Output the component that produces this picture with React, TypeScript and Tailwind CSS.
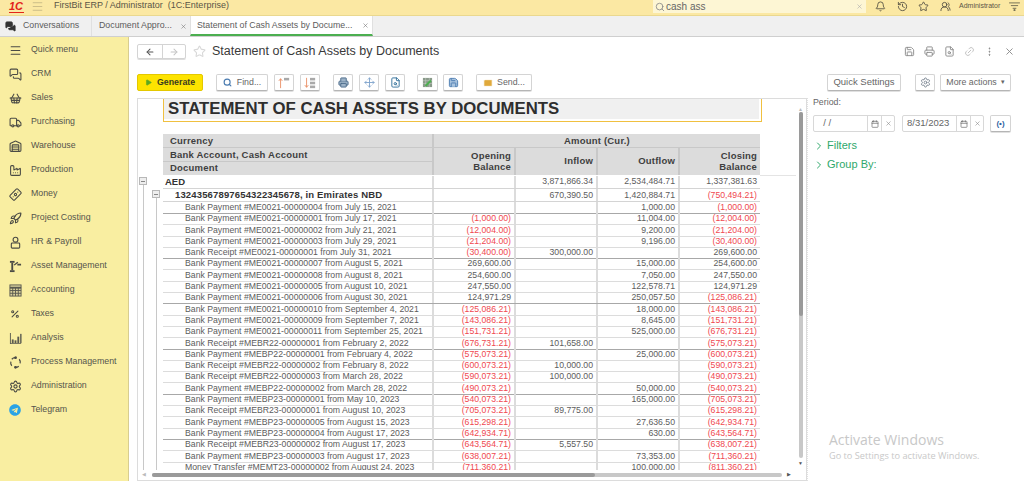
import {
  ArrowLeft,
  ArrowRight,
  Banknote,
  Bell,
  Calendar,
  ChevronRight,
  Ellipsis,
  Factory,
  FileSearch,
  History,
  Link2,
  Mail,
  Menu,
  MessagesSquare,
  Move,
  Percent,
  Play,
  Printer,
  Rocket,
  Save,
  Search,
  Settings,
  ShoppingBasket,
  Star,
  Truck,
  UsersRound,
  Warehouse,
  X,
} from "lucide-react";
import { FaTelegram } from "react-icons/fa";
import type { ReactNode } from "react";

const FONT = "font-['Liberation_Sans',Arial,sans-serif]";

function HrIcon() {
  return (
    <svg viewBox="0 0 14 14" className="h-[13px] w-[13px]" fill="none" stroke="#4b4b45" strokeWidth="1.2">
      <circle cx="7" cy="4" r="2.6" />
      <rect x="2.5" y="7.5" width="9" height="5.5" rx="1" />
    </svg>
  );
}

function AssetIcon() {
  return (
    <svg viewBox="0 0 14 14" className="h-[13px] w-[13px]" fill="#4b4b45">
      <rect x="1" y="1" width="5" height="2" />
      <rect x="2.5" y="3" width="2" height="8" />
      <rect x="1" y="11" width="5" height="2" />
      <path d="M5 5 L9 2 L10 3 L6 6 Z M9 4 L13 4 L13 6 L9 6 Z" />
    </svg>
  );
}

function GridIcon() {
  return (
    <svg viewBox="0 0 14 14" className="h-[13px] w-[13px]" fill="none" stroke="#5a5a50" strokeWidth="1">
      <rect x="1" y="1" width="12" height="12" fill="#d8cf9a" />
      <path d="M1 4h12" strokeWidth="2" />
      <path d="M1 7h12M1 10h12M4 4v9M7 4v9M10 4v9" />
    </svg>
  );
}

function ChartIcon() {
  return (
    <svg viewBox="0 0 14 14" className="h-[13px] w-[13px]" fill="#5a5a50">
      <path d="M1 1h1v11h11v1H1z" />
      <rect x="3" y="8" width="2" height="4" />
      <rect x="6" y="9" width="2" height="3" />
      <rect x="9" y="5" width="2" height="7" />
      <rect x="12" y="2" width="1.5" height="10" />
    </svg>
  );
}

function ProcessIcon() {
  return (
    <svg viewBox="0 0 14 14" className="h-[13px] w-[13px]" fill="none" stroke="#4b4b45" strokeWidth="1.3">
      <path d="M3 3.5A5 5 0 0 1 8 2M11 3.5A5 5 0 0 1 12 8M10.5 11A5 5 0 0 1 6 12M3 10.5A5 5 0 0 1 2 6" />
      <circle cx="7" cy="1.8" r="0.8" fill="#4b4b45" />
      <circle cx="7" cy="12.2" r="0.8" fill="#4b4b45" />
    </svg>
  );
}

const NAV: { label: string; icon: ReactNode }[] = [
  { label: "Quick menu", icon: <Menu size={13} color="#4b4b45" /> },
  { label: "CRM", icon: <MessagesSquare size={13} color="#4b4b45" /> },
  { label: "Sales", icon: <ShoppingBasket size={13} color="#4b4b45" /> },
  { label: "Purchasing", icon: <Truck size={13} color="#4b4b45" /> },
  { label: "Warehouse", icon: <Warehouse size={13} color="#4b4b45" /> },
  { label: "Production", icon: <Factory size={13} color="#4b4b45" /> },
  { label: "Money", icon: <Banknote size={13} color="#4b4b45" className="-rotate-45" /> },
  { label: "Project Costing", icon: <Rocket size={13} color="#4b4b45" /> },
  { label: "HR & Payroll", icon: <HrIcon /> },
  { label: "Asset Management", icon: <AssetIcon /> },
  { label: "Accounting", icon: <GridIcon /> },
  { label: "Taxes", icon: <Percent size={10} color="#4b4b45" strokeWidth={2.5} /> },
  { label: "Analysis", icon: <ChartIcon /> },
  { label: "Process Management", icon: <ProcessIcon /> },
  { label: "Administration", icon: <Settings size={13} color="#4b4b45" /> },
  { label: "Telegram", icon: <FaTelegram size={12} color="#2aa3e6" /> },
];

// label, opening, inflow, outflow, closing
const ROWS: string[][] = [
  ["Bank Payment #ME0021-00000004 from July 15, 2021", "", "", "1,000.00", "(1,000.00)"],
  ["Bank Payment #ME0021-00000001 from July 17, 2021", "(1,000.00)", "", "11,004.00", "(12,004.00)"],
  ["Bank Payment #ME0021-00000002 from July 21, 2021", "(12,004.00)", "", "9,200.00", "(21,204.00)"],
  ["Bank Payment #ME0021-00000003 from July 29, 2021", "(21,204.00)", "", "9,196.00", "(30,400.00)"],
  ["Bank Receipt #ME0021-00000001 from July 31, 2021", "(30,400.00)", "300,000.00", "", "269,600.00"],
  ["Bank Payment #ME0021-00000007 from August 5, 2021", "269,600.00", "", "15,000.00", "254,600.00"],
  ["Bank Payment #ME0021-00000008 from August 8, 2021", "254,600.00", "", "7,050.00", "247,550.00"],
  ["Bank Payment #ME0021-00000005 from August 10, 2021", "247,550.00", "", "122,578.71", "124,971.29"],
  ["Bank Payment #ME0021-00000006 from August 30, 2021", "124,971.29", "", "250,057.50", "(125,086.21)"],
  ["Bank Payment #ME0021-00000010 from September 4, 2021", "(125,086.21)", "", "18,000.00", "(143,086.21)"],
  ["Bank Payment #ME0021-00000009 from September 7, 2021", "(143,086.21)", "", "8,645.00", "(151,731.21)"],
  ["Bank Payment #ME0021-00000011 from September 25, 2021", "(151,731.21)", "", "525,000.00", "(676,731.21)"],
  ["Bank Receipt #MEBR22-00000001 from February 2, 2022", "(676,731.21)", "101,658.00", "", "(575,073.21)"],
  ["Bank Payment #MEBP22-00000001 from February 4, 2022", "(575,073.21)", "", "25,000.00", "(600,073.21)"],
  ["Bank Receipt #MEBR22-00000002 from February 8, 2022", "(600,073.21)", "10,000.00", "", "(590,073.21)"],
  ["Bank Receipt #MEBR22-00000003 from March 28, 2022", "(590,073.21)", "100,000.00", "", "(490,073.21)"],
  ["Bank Payment #MEBP22-00000002 from March 28, 2022", "(490,073.21)", "", "50,000.00", "(540,073.21)"],
  ["Bank Payment #MEBP23-00000001 from May 10, 2023", "(540,073.21)", "", "165,000.00", "(705,073.21)"],
  ["Bank Receipt #MEBR23-00000001 from August 10, 2023", "(705,073.21)", "89,775.00", "", "(615,298.21)"],
  ["Bank Payment #MEBP23-00000005 from August 15, 2023", "(615,298.21)", "", "27,636.50", "(642,934.71)"],
  ["Bank Payment #MEBP23-00000004 from August 17, 2023", "(642,934.71)", "", "630.00", "(643,564.71)"],
  ["Bank Receipt #MEBR23-00000002 from August 17, 2023", "(643,564.71)", "5,557.50", "", "(638,007.21)"],
  ["Bank Payment #MEBP23-00000003 from August 17, 2023", "(638,007.21)", "", "73,353.00", "(711,360.21)"],
  ["Money Transfer #MEMT23-00000002 from August 24, 2023", "(711,360.21)", "", "100,000.00", "(811,360.21)"],
];

function Amount({ value }: { value: string }) {
  const red = value.startsWith("(");
  return (
    <div
      className={`h-full border-l-2 border-[#dcdcdc] pr-[3px] text-right ${red ? "text-[#f0484f]" : "text-[#5c5c5c]"}`}
    >
      {value}
    </div>
  );
}

function Btn({ children, className = "" }: { children: ReactNode; className?: string }) {
  return (
    <div
      className={`flex h-[17px] items-center justify-center rounded-[2px] border border-[#d4d4d4] border-b-[#b5b5b5] bg-white shadow-[0_1px_0_#e0e0e0] ${className}`}
    >
      {children}
    </div>
  );
}

function SortIcon({ down }: { down?: boolean }) {
  return (
    <svg viewBox="0 0 14 14" className="h-[12px] w-[12px]">
      <path d={down ? "M3 1v11M1 9.5L3 12l2-2.5" : "M3 13V2M1 4.5L3 2l2 2.5"} stroke="#e98a5e" strokeWidth="1" fill="none" />
      <rect x="7" y="1" width="6" height="3" fill="#a9a9a9" />
      {down && <rect x="7" y="5.5" width="6" height="3" fill="#a9a9a9" />}
      {down && <rect x="7" y="10" width="6" height="3" fill="#a9a9a9" />}
    </svg>
  );
}

function DateField({ value, className }: { value: string; className: string }) {
  return (
    <div className={`flex h-[17px] items-center rounded-[2px] border border-[#d8d8d8] text-[9.5px] text-[#666] ${className}`}>
      <span className="flex-1 pl-[4px]">{value}</span>
      <span className="flex h-full w-[14px] items-center justify-center border-l border-[#d8d8d8]">
        <Calendar size={8} color="#666" />
      </span>
      <span className="flex h-full w-[13px] items-center justify-center border-l border-[#d8d8d8]">
        <X size={7} color="#888" />
      </span>
    </div>
  );
}

export default function App() {
  return (
    <div className={`relative flex h-[481px] w-[1024px] flex-col overflow-hidden bg-white ${FONT}`}>
      {/* Top bar */}
      <header className="flex h-[16px] shrink-0 items-start border-b border-[#ead88f] bg-[#fbe8a3] text-[#5a5546]">
        <span className="ml-[9px] w-[15px] border-b border-[#e2231a] text-[11px] leading-[12px] font-bold italic text-[#e2231a]">1C</span>
        <Menu size={13} color="#b3a77c" className="ml-[7px]" strokeWidth={1.2} />
        <span className="ml-[10px] text-[9px] leading-[10px]">FirstBit ERP / Administrator&nbsp; (1C:Enterprise)</span>
        <div className="ml-auto flex h-[13px] w-[213px] items-center bg-[#fdf6d4] pl-[2px] text-[10px] text-[#666]">
          <Search size={10} color="#888" />
          <span className="ml-[1px] flex-1">cash ass</span>
          <X size={7} color="#aaa" className="mr-[3px]" />
        </div>
        <div className="ml-[8.5px] flex h-[13px] items-center text-[#5a5546]">
          <Bell size={11} />
          <History size={11} className="ml-[11px]" />
          <Star size={11} className="ml-[10px]" />
          <UsersRound size={11} className="ml-[11px]" />
          <span className="ml-[8.5px] w-[41px] whitespace-nowrap text-[7px]">Administrator</span>
          <svg viewBox="0 0 12 10" className="ml-[8.5px] mr-[4.5px] h-[9px] w-[11px]" stroke="#6b6650" fill="none">
            <path d="M0 1h12M2 4h8M4 7h4" />
            <circle cx="6" cy="9" r="0.8" fill="#6b6650" />
          </svg>
        </div>
      </header>

      {/* Tabs */}
      <nav className="flex h-[21px] shrink-0 whitespace-nowrap border-b border-[#cfcfcf] bg-[#f0f0f0] text-[8.8px] text-[#5c5c5c]">
        <div className="flex w-[92px] items-center border-r border-[#e0e0e0]">
          <MessagesSquare size={11} color="#333" fill="#333" className="ml-[5px]" />
          <span className="ml-[7px]">Conversations</span>
        </div>
        <div className="flex w-[98px] items-center pl-[7px] pr-[3px]">
          <span className="flex-1">Document Appro...</span>
          <X size={7} color="#777" />
        </div>
        <div className="flex w-[183px] items-center border-x border-[#e0e0e0] border-b-2 border-b-[#4caf50] bg-white pl-[6px] pr-[3px] pt-[1px]">
          <span className="flex-1">Statement of Cash Assets by Docume...</span>
          <X size={7} color="#777" />
        </div>
      </nav>

      <div className="flex min-h-0 flex-1">
        {/* Sidebar */}
        <aside className="w-[129px] shrink-0 border-r border-[#d8cd90] bg-[#f9eea1] pt-px text-[8.8px] text-[#55554c]">
          {NAV.map((item) => (
            <div key={item.label} className="flex h-[24px] items-center">
              <span className="flex w-[31px] shrink-0 justify-center pr-px">{item.icon}</span>
              <span className="whitespace-nowrap">{item.label}</span>
            </div>
          ))}
        </aside>

        {/* Content */}
        <main className="flex min-w-0 flex-1 flex-col pl-[8px]">
          <div className="h-[37px] shrink-0 pt-[7px]">
            <div className="flex h-[15px] items-center">
              <div className="flex h-[15px] w-[49px] rounded-[2px] border border-[#d4d4d4] shadow-[0_1px_0_#ddd]">
                <span className="flex w-[25px] items-center justify-center border-r border-[#d4d4d4]">
                  <ArrowLeft size={10} color="#555" strokeWidth={2.5} />
                </span>
                <span className="flex flex-1 items-center justify-center">
                  <ArrowRight size={10} color="#c4c4c4" strokeWidth={2.5} />
                </span>
              </div>
              <Star size={13} color="#d8d8d8" className="ml-[7px]" />
              <h1 className="ml-[6px] text-[12.5px] text-[#3a3a3a]">Statement of Cash Assets by Documents</h1>
              <div className="ml-auto mr-[9px] flex items-center text-[#8a8a8a]">
                <Save size={11} />
                <Printer size={11} className="ml-[9px]" />
                <FileSearch size={11} className="ml-[9px]" />
                <Link2 size={11} color="#c0c0c0" className="ml-[9px] -rotate-45" />
                <Ellipsis size={11} className="ml-[9px] rotate-90" />
                <X size={11} className="ml-[9px]" />
              </div>
            </div>
          </div>

          {/* Toolbar */}
          <div className="flex h-[17px] shrink-0 items-center text-[8.8px] text-[#666]">
            <div className="flex h-[17px] w-[66px] items-center rounded-[2px] border border-[#e4c800] bg-[#fde300] pl-[7px] font-bold text-[#3a3a20]">
              <Play size={7} color="#5da820" fill="#5da820" />
              <span className="ml-[5px]">Generate</span>
            </div>
            <Btn className="ml-[13px] w-[52px]">
              <Search size={9} color="#4a7bb0" strokeWidth={3} />
              <span className="ml-[5px]">Find...</span>
            </Btn>
            <Btn className="ml-[6px] w-[20px]"><SortIcon /></Btn>
            <Btn className="ml-[6px] w-[20px]"><SortIcon down /></Btn>
            <Btn className="ml-[13px] w-[20px]"><Printer size={11} color="#4a6a8a" fill="#9db3c8" /></Btn>
            <Btn className="ml-[6px] w-[20px]"><Move size={11} color="#7fa3cc" /></Btn>
            <Btn className="ml-[6px] w-[20px]"><FileSearch size={11} color="#2f6f99" /></Btn>
            <Btn className="ml-[12px] w-[21px]">
              <svg viewBox="0 0 12 12" className="h-[11px] w-[11px]">
                <rect x="1" y="1" width="10" height="10" fill="#8a9a8a" />
                <path d="M1 4h10M1 7h10M4 1v10M8 1v10" stroke="#c8d0c8" strokeWidth="0.6" />
                <path d="M3 9L9 3l1.5 1.5-6 6z" fill="#4caf50" />
              </svg>
            </Btn>
            <Btn className="ml-[5px] w-[20px]"><Save size={11} color="#4a7bb0" fill="#a9c4df" /></Btn>
            <Btn className="ml-[13px] w-[56px]">
              <Mail size={10} color="#fff" fill="#e0a93b" />
              <span className="ml-[4px]">Send...</span>
            </Btn>
            <Btn className="ml-auto w-[74px] border-[#bdbdbd] bg-[#ececec] text-[9.5px]">Quick Settings</Btn>
            <Btn className="ml-[14px] w-[20px]"><Settings size={11} color="#7d8894" /></Btn>
            <Btn className="ml-[5px] mr-[13px] w-[71px]">
              More actions
              <span className="ml-[4px] text-[7px]">▾</span>
            </Btn>
          </div>

          <div className="mt-[7px] flex min-h-0 flex-1">
            {/* Report */}
            <section className="relative w-[670px] shrink-0 overflow-hidden border border-[#dcdcdc] text-[8.7px] leading-[11px]">
              <div className="ml-[25px] flex h-[23px] w-[599px] items-start border-b border-l border-r border-[#f0c040] pr-[2px]">
                <div className="h-[20px] flex-1 bg-[#f0f0f0] pl-[4px] text-[16.75px] leading-[20px] font-bold text-[#2e2e2e]">
                  STATEMENT OF CASH ASSETS BY DOCUMENTS
                </div>
              </div>
              <div className="h-[12px]" />

              {/* Header */}
              <div className="grid grid-cols-[25px_269px_82px_82px_82px_82px] grid-rows-[14px_13.5px_13.5px] text-[9.5px] font-bold tracking-[0.2px] text-[#3f3f3f]">
                <div className="row-span-3" />
                <div className="border-b border-[#c8c8c8] bg-[#dcdcdc] pl-[7px] leading-[13px]">Currency</div>
                <div className="col-span-4 border-b border-l-2 border-[#c8c8c8] bg-[#dcdcdc] text-center leading-[13px]">Amount (Cur.)</div>
                <div className="border-b border-[#c8c8c8] bg-[#dcdcdc] pl-[7px] leading-[13px]">Bank Account, Cash Account</div>
                <div className="row-span-2 flex items-center justify-end border-l-2 border-[#c8c8c8] bg-[#dcdcdc] pb-[2px] pr-[3px] text-right leading-[11px]">Opening<br />Balance</div>
                <div className="row-span-2 flex items-center justify-end border-l-2 border-[#c8c8c8] bg-[#dcdcdc] pb-[2px] pr-[3px]">Inflow</div>
                <div className="row-span-2 flex items-center justify-end border-l-2 border-[#c8c8c8] bg-[#dcdcdc] pb-[2px] pr-[3px]">Outflow</div>
                <div className="row-span-2 flex items-center justify-end border-l-2 border-[#c8c8c8] bg-[#dcdcdc] pb-[2px] pr-[3px] text-right leading-[11px]">Closing<br />Balance</div>
                <div className="bg-[#dcdcdc] pl-[7px] leading-[12px]">Document</div>
              </div>

              {/* Body */}
              <div className="mt-px grid h-[13px] grid-cols-[25px_269px_82px_82px_82px_82px] leading-[11px]">
                <div />
                <div className="border-b border-[#d4d4d4] pl-[2px] text-[9.5px] font-bold text-[#333]">AED</div>
                {["", "3,871,866.34", "2,534,484.71", "1,337,381.63"].map((value, c) => (
                  <div key={c} className="border-b border-[#d4d4d4]"><Amount value={value} /></div>
                ))}
              </div>
              <div className="grid h-[13px] grid-cols-[25px_269px_82px_82px_82px_82px] leading-[12px]">
                <div />
                <div className="border-b border-[#d4d4d4] pl-[12px] text-[9.5px] font-bold tracking-[0.15px] text-[#333]">13243567897654322345678, in Emirates NBD</div>
                {["", "670,390.50", "1,420,884.71", "(750,494.21)"].map((value, c) => (
                  <div key={c} className="border-b border-[#d4d4d4]"><Amount value={value} /></div>
                ))}
              </div>
              {ROWS.map((row, i) => (
                <div
                  key={row[0]}
                  className="grid h-[11.3px] grid-cols-[25px_269px_82px_82px_82px_82px] leading-[11px]"
                >
                  <div />
                  <div className={`border-b pl-[22px] whitespace-nowrap text-[#5c5c5c] ${i % 4 === 0 ? "border-[#a8a8a8]" : "border-[#dcdcdc]"}`}>{row[0]}</div>
                  {row.slice(1).map((value, c) => (
                    <div key={c} className={`border-b ${i % 4 === 0 ? "border-[#a8a8a8]" : "border-[#dcdcdc]"}`}>
                      <Amount value={value} />
                    </div>
                  ))}
                </div>
              ))}

              {/* Outline tree */}
              <div className="absolute left-[1px] top-[78px] flex h-[8px] w-[8px] items-center justify-center border border-[#b8b8b8] bg-[#eee]">
                <span className="h-px w-[4px] bg-[#888]" />
              </div>
              <div className="absolute left-[14px] top-[91px] flex h-[8px] w-[8px] items-center justify-center border border-[#b8b8b8] bg-[#eee]">
                <span className="h-px w-[4px] bg-[#888]" />
              </div>
              <div className="absolute left-[5px] top-[86px] h-[290px] w-px bg-[#c8c8c8]" />
              <div className="absolute left-[18px] top-[99px] h-[277px] w-px bg-[#c8c8c8]" />
              <div className="absolute left-[622px] right-[9px] top-[76px] h-px bg-[#e4e4e4]" />

              {/* Scrollbars */}
              <div className="absolute bottom-0 left-0 right-0 h-[10px] bg-white" />
              <div className="absolute right-0 top-0 h-full w-[10px] bg-white" />
              <div className="absolute right-[3px] top-[13px] h-[346px] w-[4px] rounded-full bg-[#c8c8c8]">
                <div className="h-[204px] rounded-full bg-[#9a9a9a]" />
              </div>
              <span className="absolute right-[3px] top-[8px] text-[5px] leading-[5px] text-[#bbb]">▲</span>
              <span className="absolute right-[3px] top-[362px] text-[5px] leading-[5px] text-[#555]">▼</span>
              <div className="absolute bottom-[3px] left-[14px] h-[4px] w-[630px] rounded-full bg-[#c8c8c8]">
                <div className="h-full w-[443px] rounded-full bg-[#9a9a9a]" />
              </div>
              <span className="absolute bottom-[3px] left-[4px] text-[5px] leading-[5px] text-[#bbb]">◀</span>
              <span className="absolute bottom-[3px] left-[649px] text-[5px] leading-[5px] text-[#555]">▶</span>
            </section>

            {/* Quick settings */}
            <aside className="flex-1 border-l border-dotted border-[#e0e0e0] pl-[5px] text-[#666]">
              <div className="text-[8.8px] leading-[9px]">Period:</div>
              <div className="mt-[8px] flex items-center">
                <DateField value="  / /" className="w-[82px] whitespace-pre" />
                <DateField value="8/31/2023" className="ml-[7px] w-[82px]" />
                <Btn className="ml-[6px] w-[21px] text-[8px] font-bold text-[#2f5f9f]">(•)</Btn>
              </div>
              <div className="mt-[7px] flex h-[13px] items-center text-[11px] text-[#2ea86b]">
                <ChevronRight size={12} />
                <span className="ml-[2px]">Filters</span>
              </div>
              <div className="mt-[6px] flex h-[13px] items-center text-[11px] text-[#2ea86b]">
                <ChevronRight size={12} />
                <span className="ml-[2px]">Group By:</span>
              </div>
            </aside>
          </div>
        </main>
      </div>

      {/* Activation watermark */}
      <div className="absolute left-[829px] top-[432px] font-['Open_Sans',sans-serif] text-[#c8c8c8]">
        <div className="text-[14px] leading-[16px]">Activate Windows</div>
        <div className="text-[9.2px] leading-[16px]">Go to Settings to activate Windows.</div>
      </div>
    </div>
  );
}
